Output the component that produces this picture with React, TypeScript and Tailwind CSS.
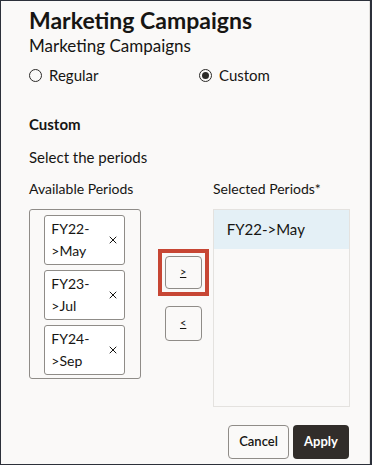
import { X } from "lucide-react";

const font = { fontFamily: 'Lato, "Noto Sans", sans-serif' };

const available = [
  ["FY22-", ">May"],
  ["FY23-", ">Jul"],
  ["FY24-", ">Sep"],
];

function Radio({ label, checked }: { label: string; checked?: boolean }) {
  return (
    <label className="flex items-center gap-[7px] text-[15px] leading-[20px] text-[#161513]">
      <span className="flex h-[13px] w-[13px] items-center justify-center rounded-full border border-[#2b2a28]">
        {checked && <span className="h-[7px] w-[7px] rounded-full bg-[#2b2a28]" />}
      </span>
      {label}
    </label>
  );
}

export default function App() {
  return (
    <div
      className="h-[465px] w-[372px] overflow-hidden border-t border-b border-l border-r-2 border-[#2c303a] bg-[#faf9f8] text-[#161513]"
      style={font}
    >
      <div className="flex h-full flex-col border-r border-[#e4e2df] pl-[28px] pr-[19px]">
        <h1 className="mt-[4px] text-[23px] font-bold leading-[30px]">Marketing Campaigns</h1>
        <p className="text-[17px] leading-[22px]">Marketing Campaigns</p>

        <div className="mt-[8px] grid grid-cols-[170px_1fr]">
          <Radio label="Regular" />
          <Radio label="Custom" checked />
        </div>

        <h2 className="mt-[29px] text-[15px] font-bold leading-[20px]">Custom</h2>
        <p className="mt-[13px] text-[15px] leading-[20px]">Select the periods</p>

        <div className="mt-[12px] grid grid-cols-[184px_1fr] text-[14px] leading-[20px]">
          <span>Available Periods</span>
          <span>Selected Periods*</span>
        </div>

        <div className="mt-[10px] flex">
          <div className="flex h-[170px] w-[113px] flex-col items-center gap-[5px] rounded-[3px] border border-[#8f8c88] pt-[5px]">
            {available.map(([a, b]) => (
              <div
                key={a + b}
                className="flex h-[50px] w-[81px] items-center justify-between rounded-[3px] border border-[#8f8c88] bg-white pl-[6px] pr-[5px]"
              >
                <span className="flex flex-col text-[14px] leading-[22px]">
                  <span>{a}</span>
                  <span>{b}</span>
                </span>
                <X size={12} strokeWidth={2} className="text-[#161513]" />
              </div>
            ))}
          </div>

          <div className="ml-[17px] mt-[40px] flex w-[51px] flex-col items-center gap-[10px]">
            <div className="border-[4px] border-[#c74634] p-[3px]">
              <button className="flex h-[33px] w-[37px] items-center justify-center rounded-[4px] border border-[#8f8c88] text-[11px]">
                <u>&gt;</u>
              </button>
            </div>
            <button className="flex h-[35px] w-[37px] items-center justify-center rounded-[4px] border border-[#8f8c88] text-[11px]">
              <u>&lt;</u>
            </button>
          </div>

          <div className="ml-[4px] h-[198px] w-[139px] border border-[#e4e2df]">
            <div className="flex h-[39px] items-center bg-[#e4f0f6] pl-[13px] text-[15px]">FY22-&gt;May</div>
          </div>
        </div>

        <div className="mt-auto mb-[5px] flex justify-end gap-[4px] pr-[1px]">
          <button className="h-[34px] w-[61px] rounded-[4px] border border-[#8f8c88] text-[13px] font-semibold">Cancel</button>
          <button className="h-[34px] w-[56px] rounded-[4px] bg-[#312d2a] text-[13px] font-bold text-white">Apply</button>
        </div>
      </div>
    </div>
  );
}
